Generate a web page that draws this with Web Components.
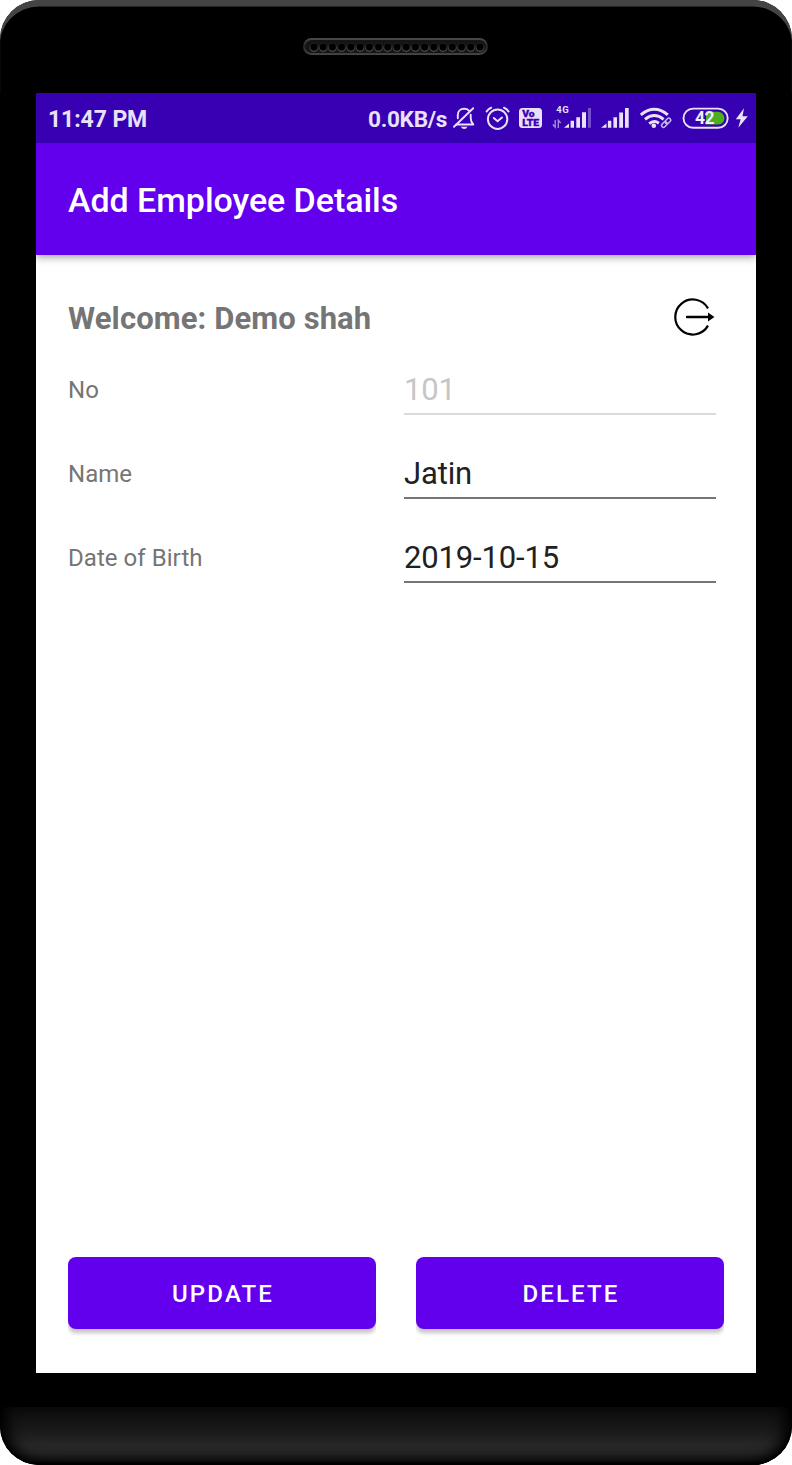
<!DOCTYPE html>
<html lang="en">
<head>
<meta charset="utf-8">
<title>Add Employee Details</title>
<style>
html,body{margin:0;background:#fff}
body{font-family:Roboto,"Liberation Sans",sans-serif}
</style>
</head>
<body>
<phone-frame>
  <status-bar></status-bar>
  <app-bar>Add Employee Details</app-bar>
  <employee-form user="Demo shah">
    <form-field label="No" disabled>101</form-field>
    <form-field label="Name">Jatin</form-field>
    <form-field label="Date of Birth">2019-10-15</form-field>
    <action-button slot="actions">UPDATE</action-button>
    <action-button slot="actions">DELETE</action-button>
  </employee-form>
</phone-frame>
<script>
class Base extends HTMLElement{
  connectedCallback(){
    if(this.shadowRoot) return;
    this.attachShadow({mode:'open'}).innerHTML=this.render();
  }
}

customElements.define('phone-speaker',class extends Base{
  render(){
    let holes='';
    for(let i=0;i<19;i++){
      const x=(11+i*9.22).toFixed(2);
      holes+=`<circle cx="${x}" cy="9.3" r="4" fill="#000" stroke="url(#rim)" stroke-width="1.1"/>`;
    }
    return `<style>:host{display:block;width:185px;height:18px}svg{display:block}</style>
    <svg width="185" height="18" viewBox="0 0 185 18">
      <defs><linearGradient id="rim" x1="0" y1="0" x2="0" y2="1"><stop offset=".2" stop-color="#1c1c1c"/><stop offset="1" stop-color="#5a5a5a"/></linearGradient>
      <linearGradient id="edge" x1="0" y1="0" x2="0" y2="1"><stop offset="0" stop-color="#484848"/><stop offset=".5" stop-color="#242424"/><stop offset="1" stop-color="#444"/></linearGradient></defs>
      <rect x="1" y="1" width="183" height="15" rx="7.5" fill="#151515" stroke="url(#edge)" stroke-width="2"/>${holes}
    </svg>`;
  }
});

customElements.define('phone-frame',class extends Base{
  render(){
    return `<style>
    :host{display:flex;flex-direction:column;align-items:center;box-sizing:border-box;width:792px;height:1465px;border-radius:39px;overflow:hidden;background:#000}
    .top{width:100%;height:93px;display:flex;justify-content:center;align-items:flex-start;box-sizing:border-box;padding:38px 1px 0 0;border-radius:39px 39px 0 0;
      box-shadow:inset 0 7px 0 -.5px #444,inset 0 2px 1px #4e4e4e}
    .screen{width:720px;height:1280px;background:#fff;display:flex;flex-direction:column}
    .chin{margin-top:34px;width:100%;height:58px;background:linear-gradient(#0b0b0b,#171717 35%,#262626 65%,#252525 78%,#171717 92%,#000);border-radius:0 0 39px 39px;box-shadow:inset 0 -2px 2px #000,inset 13px -4px 14px -6px #000,inset -13px -4px 14px -6px #000}
    </style>
    <div class="top"><phone-speaker></phone-speaker></div>
    <div class="screen"><slot></slot></div>
    <div class="chin"></div>`;
  }
});

const ICONS={
  mute:[452,24,`<g fill="none" stroke="#e9e2f7" stroke-width="1.9" stroke-linecap="round" stroke-linejoin="round"><path d="M456.3 124.5H473.3C471.3 122.5 470.7 120.7 470.7 118V114.6M469 110.6C467.8 109.3 466 108.8 464.1 108.8C460 108.8 457.8 111.6 457.8 115V118.3"/><path d="M473.2 108.2L454 126.8"/></g><path d="M460.8 126.7H467.6Q466.3 129 464.2 129T460.8 126.7Z" fill="#e9e2f7"/>`],
  alarm:[485,25,`<g fill="none" stroke="#e9e2f7" stroke-width="2" stroke-linecap="round"><circle cx="497.6" cy="119.2" r="9.7"/><path d="M493.8 118L497.6 121.3L502 117.6"/><path d="M486.6 111.4Q488.2 108.8 491.2 107.7M508.5 111.4Q507 108.8 504 107.7"/></g>`],
  volte:[518,25,`<rect x="519" y="108" width="23" height="20" rx="3.5" fill="#e9e2f7"/><g fill="#3700b3" stroke="#3700b3" stroke-width=".3" font-family="Roboto" font-weight="900"><text x="522.2" y="116.6" font-size="8.4" textLength="12.4" lengthAdjust="spacingAndGlyphs">Vo</text><text x="522.2" y="126.3" font-size="8.8" textLength="17" lengthAdjust="spacingAndGlyphs">LTE</text></g>`],
  cell4g:[552,40,`<text x="556.2" y="113" font-family="Roboto" font-weight="700" font-size="9.5" textLength="12.5" fill="#e9e2f7">4G</text><path d="M555.2 120V127.2L552.8 124.5M558.3 128V120.3L560.7 123" fill="none" stroke="#a58cdb" stroke-width="1.4"/><g fill="#e9e2f7"><path d="M564 127.8L569 123.5V127.8ZM570.6 120.8H574V127.8H570.6ZM576.3 117.2H580V127.8H576.3ZM582 112.3H586V127.8H582Z"/><path d="M588 108H591V127.8H588Z" opacity=".35"/></g>`],
  cell:[600,30,`<path d="M601 127.8L606.5 123.5V127.8ZM607.9 120.8H611.3V127.8H607.9ZM613.4 117.2H617V127.8H613.4ZM619.2 112.5H623V127.8H619.2ZM625 108H628.7V127.8H625Z" fill="#e9e2f7"/>`],
  wifi:[639,34,`<g fill="none" stroke="#e9e2f7" stroke-width="2.9"><path d="M640.8 114.8Q654.3 103.6 667.8 114.8"/><path d="M645 119.3Q654.3 111.8 663.6 119.3"/><path d="M649.2 123.7Q654 119.7 658.9 123.2"/></g><circle cx="653.8" cy="125.8" r="2.3" fill="#e9e2f7"/><g fill="none" stroke="#c6b5ea" stroke-width="1.5"><rect x="661.2" y="122.7" width="6.3" height="3.8" rx="1.9" transform="rotate(-45 664.3 124.6)"/><rect x="664.8" y="119" width="6.3" height="3.8" rx="1.9" transform="rotate(-45 668 121)"/></g>`],
  battery:[682,48,`<rect x="683.5" y="108.6" width="44.2" height="19.2" rx="9.6" fill="none" stroke="#e9e2f7" stroke-width="1.9"/><path d="M706 111.8H718A6.4 6.4 0 0 1 718 124.6H706Z" fill="#4caf20"/><text x="695" y="124.4" font-family="Roboto" font-weight="700" font-size="17.5" textLength="19.5" fill="#f2edfb">42</text>`],
  bolt:[735,14,`<path d="M744 108.2L735.8 119.3H740.6L738.3 127.8L747.8 116.3H742.5Z" fill="#e9e2f7"/>`]
};
customElements.define('status-icon',class extends Base{
  render(){
    const [x,w,art]=ICONS[this.getAttribute('name')];
    return `<style>:host{display:block;flex:none}svg{display:block}</style><svg width="${w}" height="26" viewBox="${x} 105 ${w} 26">${art}</svg>`;
  }
});

customElements.define('status-bar',class extends Base{
  render(){
    const gaps={mute:5,alarm:9,volte:8,cell4g:9,cell:8,wifi:9,battery:9,bolt:5};
    const names=Object.keys(gaps);
    return `<style>
    :host{display:flex;box-sizing:border-box;height:50px;background:#3700b3;color:#e9e2f7;padding:0 7px 0 12px;align-items:center;font-weight:700;font-size:23px;letter-spacing:-.1px;line-height:26px;flex:none}
    .right{margin-left:auto;display:flex;align-items:center}
    .rate{width:79px;white-space:nowrap;font-size:22.6px;letter-spacing:-.3px}
    .time,.rate{padding-top:3px}
    status-icon{letter-spacing:0}
    </style>
    <span class="time">11:47 PM</span>
    <div class="right"><span class="rate">0.0KB/s</span>${names.map(n=>`<status-icon name="${n}" style="margin-left:${gaps[n]}px"></status-icon>`).join('')}</div>`;
  }
});

customElements.define('app-bar',class extends Base{
  render(){
    return `<style>:host{display:flex;align-items:center;height:112px;flex:none;box-sizing:border-box;padding:1px 32px 0;background:#6200ee;color:#fff;font-size:34px;font-weight:500;letter-spacing:-.05px;box-shadow:0 2px 8px rgba(0,0,0,.4);clip-path:inset(0 0 -14px 0)}</style><slot></slot>`;
  }
});

customElements.define('form-field',class extends Base{
  render(){
    return `<style>
    :host{display:grid;grid-template-columns:336px 312px;height:84px;align-items:start;color:#212121}
    :host([disabled]){color:#c6c6c6;--line:#dadada}
    label{font-size:24px;line-height:28px;letter-spacing:.05px;color:#757575;padding-top:21px}
    .value{height:60px;box-sizing:border-box;padding-top:16px;font-size:31px;letter-spacing:-.15px;line-height:37px;border-bottom:2px solid var(--line,#757575)}
    </style><label>${this.getAttribute('label')}</label><div class="value"><slot></slot></div>`;
  }
});

customElements.define('action-button',class extends Base{
  render(){
    return `<style>
    :host{display:flex;flex:1;height:72px;box-sizing:border-box;padding:2px 0 0 2px;align-items:center;justify-content:center;border-radius:8px;background:#6200ee;color:#fff;font-size:24px;font-weight:500;letter-spacing:2.15px;box-shadow:0 4px 4px rgba(0,0,0,.24);clip-path:inset(0 0 -9px 0)}
    </style><slot></slot>`;
  }
});

customElements.define('employee-form',class extends Base{
  render(){
    return `<style>
    :host{display:flex;flex-direction:column;flex:1;box-sizing:border-box;padding:40px 32px 44px}
    header{display:flex;justify-content:space-between;align-items:flex-start;height:60px}
    h1{margin:5px 0 0;font-size:31px;letter-spacing:.1px;line-height:37px;font-weight:700;color:#757575}
    svg{display:block;margin:2px 8px 0 0}
    .actions{display:flex;gap:40px;margin-top:auto}
    </style>
    <header><h1>Welcome: ${this.getAttribute('user')}</h1>
    <svg width="43" height="40" viewBox="673 297 43 40"><path d="M708 308.4A17.5 17.5 0 1 0 708 325.6" fill="none" stroke="#000" stroke-width="2.2"/><path d="M687 317H709" stroke="#000" stroke-width="2.4" stroke-linecap="round"/><path d="M708 312.6L714.4 317L708 321.4Z"/></svg></header>
    <slot></slot>
    <div class="actions"><slot name="actions"></slot></div>`;
  }
});
</script>
</body>
</html>
